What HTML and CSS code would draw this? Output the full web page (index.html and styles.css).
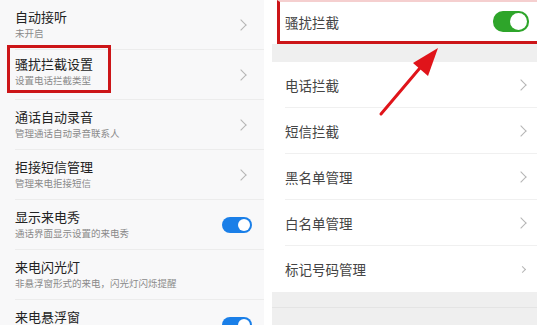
FILE: index.html
```html
<!DOCTYPE html>
<html lang="zh-CN">

<head>
    <meta charset="utf-8">
    <title>骚扰拦截设置</title>
    <link rel="stylesheet" href="styles.css">
</head>

<body>
    <div class="page">
        <div class="panel-left">
            <div class="row">
                <div class="texts">
                    <div class="title">自动接听</div>
                    <div class="sub">未开启</div>
                </div>
                <span class="chevron"></span>
            </div>
            <div class="row">
                <div class="texts mark">
                    <div class="title">骚扰拦截设置</div>
                    <div class="sub">设置电话拦截类型</div>
                </div>
                <span class="chevron"></span>
            </div>
            <div class="row">
                <div class="texts">
                    <div class="title">通话自动录音</div>
                    <div class="sub">管理通话自动录音联系人</div>
                </div>
                <span class="chevron"></span>
            </div>
            <div class="row">
                <div class="texts">
                    <div class="title">拒接短信管理</div>
                    <div class="sub">管理来电拒接短信</div>
                </div>
                <span class="chevron"></span>
            </div>
            <div class="row">
                <div class="texts">
                    <div class="title">显示来电秀</div>
                    <div class="sub">通话界面显示设置的来电秀</div>
                </div>
                <span class="switch blue"></span>
            </div>
            <div class="row">
                <div class="texts">
                    <div class="title">来电闪光灯</div>
                    <div class="sub">非悬浮窗形式的来电，闪光灯闪烁提醒</div>
                </div>
            </div>
            <div class="row">
                <div class="texts">
                    <div class="title">来电悬浮窗</div>
                    <div class="sub">&nbsp;</div>
                </div>
                <span class="switch blue"></span>
            </div>
        </div>

        <div class="panel-right">
            <div class="item top-item">
                <span class="label">骚扰拦截</span>
                <span class="switch green"></span>
            </div>
            <div class="band"></div>
            <div class="item"><span class="label">电话拦截</span><span class="chevron"></span></div>
            <div class="item"><span class="label">短信拦截</span><span class="chevron"></span></div>
            <div class="item"><span class="label">黑名单管理</span><span class="chevron"></span></div>
            <div class="item"><span class="label">白名单管理</span><span class="chevron"></span></div>
            <div class="item last"><span class="label">标记号码管理</span><span class="chevron small"></span></div>
            <div class="footer"></div>
        </div>

        <svg class="arrow" width="537" height="325" viewBox="0 0 537 325">
            <line x1="381" y1="114" x2="425" y2="62" stroke="#e0141a" stroke-width="3" stroke-linecap="round" />
            <polygon points="438,48 413,63 428,76" fill="#e0141a" />
        </svg>
    </div>
</body>

</html>
```

FILE: styles.css
```css
body {
    margin: 0;
    padding: 0;
    font-family: "Noto Sans CJK SC", "Noto Sans", sans-serif;
    background-color: #ffffff;
    overflow: hidden;
}

.page {
    position: relative;
    display: flex;
    gap: 8px;
    width: 537px;
    height: 325px;
    overflow: hidden;
}

.panel-left {
    width: 264px;
    flex-shrink: 0;
    background-color: #f8f8f9;
    padding-left: 15px;
    box-sizing: border-box;
}

.row {
    display: flex;
    align-items: center;
    justify-content: space-between;
    height: 50px;
    padding-right: 15px;
    border-bottom: 1px solid #ececec;
    box-sizing: border-box;
}

.texts {
    display: flex;
    flex-direction: column;
    padding-bottom: 2px;
}

.texts.mark {
    align-self: flex-start;
    margin-top: -5px;
    margin-left: -8px;
    padding: 6px 5px 0 5px;
    width: 104px;
    height: 48px;
    box-sizing: border-box;
    border: 3px solid #cc1518;
}

.title {
    font-size: 13px;
    line-height: 19px;
    color: #222;
}

.sub {
    font-size: 9.5px;
    line-height: 14px;
    color: #8a8a8a;
}

.chevron {
    width: 7px;
    height: 7px;
    border-top: 1px solid #b5b5b5;
    border-right: 1px solid #b5b5b5;
    transform: rotate(45deg);
    margin-right: 4px;
}

.chevron.small {
    width: 4px;
    height: 4px;
}

.switch {
    position: relative;
    display: block;
    border-radius: 10px;
}

.switch::after {
    content: "";
    position: absolute;
    top: 2px;
    right: 2px;
    border-radius: 50%;
    background-color: #fff;
}

.switch.blue {
    width: 30px;
    height: 16px;
    margin-right: -3px;
    background-color: #1a7fe8;
}

.switch.blue::after {
    width: 12px;
    height: 12px;
}

.switch.green {
    width: 36px;
    height: 21px;
    background-color: #2ea52a;
}

.switch.green::after {
    width: 17px;
    height: 17px;
}

.panel-right {
    flex: 1;
    display: flex;
    flex-direction: column;
    background-color: #fff;
}

.item {
    display: flex;
    align-items: center;
    justify-content: space-between;
    height: 46px;
    margin-left: 13px;
    padding-right: 8px;
    border-bottom: 1px solid #f0f0f0;
    box-sizing: border-box;
    flex-shrink: 0;
}

.item.last {
    border-bottom: none;
}

.label {
    font-size: 13.5px;
    color: #444;
}

.top-item {
    height: 44px;
    margin-left: 5px;
    margin-right: -12px;
    padding-left: 5px;
    padding-right: 17px;
    border: 3px solid #cc1518;
    border-top: 2px solid #f5cfcf;
}

.band {
    height: 18px;
    background-color: #efefef;
    flex-shrink: 0;
}

.footer {
    flex: 1;
    background-color: #efefef;
    border-top: 15px solid #efefef;
    box-shadow: inset 0 1px 0 #e4e4e4;
}

.arrow {
    position: absolute;
    left: 0;
    top: 0;
    pointer-events: none;
}
```
